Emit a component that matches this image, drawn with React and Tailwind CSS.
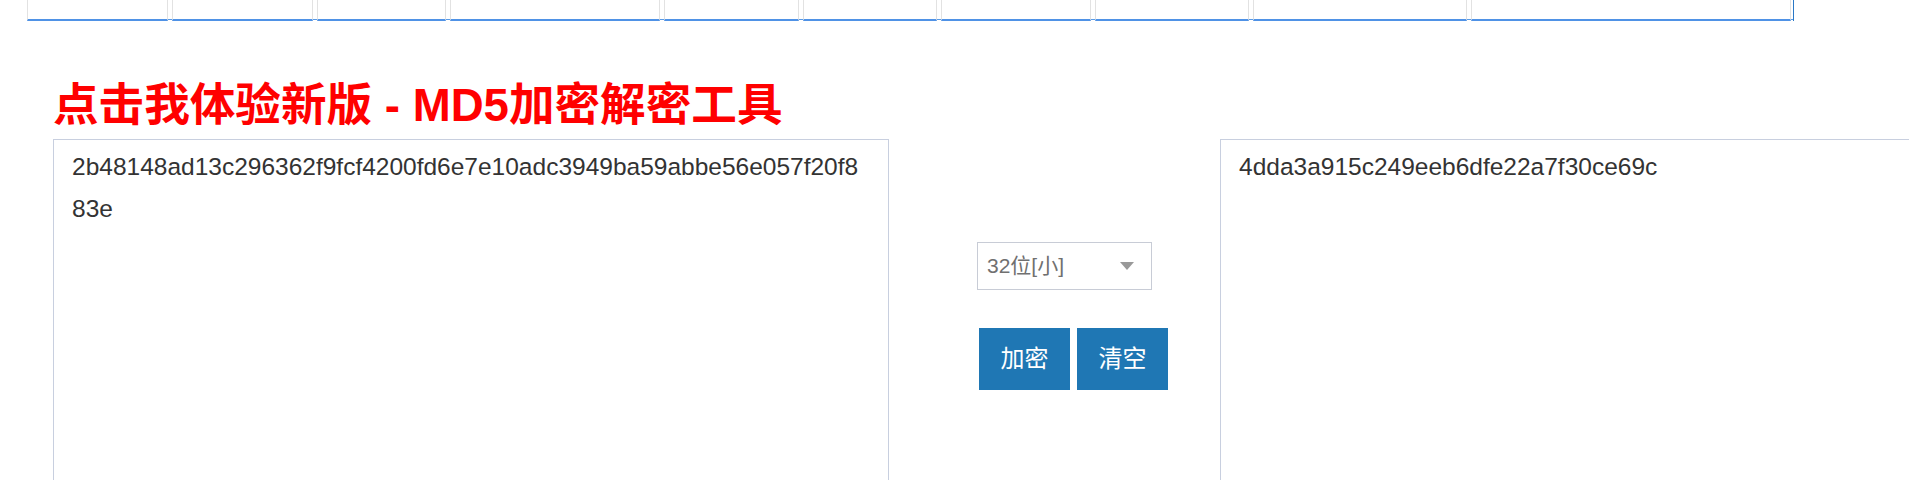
import React from "react";

const cellClasses = [
  "w-[141px]",
  "w-[141px]",
  "w-[129px]",
  "w-[210px]",
  "w-[135px]",
  "w-[134px]",
  "w-[150px]",
  "w-[154px]",
  "w-[214px]",
  "w-[320px]",
];

export default function App() {
  return (
    <div className="w-[1909px] h-[480px] overflow-hidden bg-white font-['Liberation_Sans','Noto_Sans_CJK_SC',sans-serif]">
      {/* top tab strip (bottom of cells only visible) */}
      <div className="ml-[27px] flex w-fit items-start gap-[4px] h-[20px] box-border border-b border-[#5a9be6]">
        {cellClasses.map((c, i) => (
          <div
            key={i}
            className={`${c} h-[21px] shrink-0 box-border border-x border-b-2 border-x-[#e2e2e2] border-b-[#4f92e6]`}
          />
        ))}
        <div className="-ml-[2px] w-px h-[21px] shrink-0 bg-[#2a78c6]" />
      </div>

      {/* title */}
      <div className="mt-[63px] ml-[53px] h-[46px] leading-[46px] text-[45.6px] font-bold text-[#ff0000] whitespace-nowrap">
        点击我体验新版 - MD5加密解密工具
      </div>

      {/* main row */}
      <div className="mt-[10px] ml-[53px] flex items-start">
        <textarea
          readOnly
          defaultValue="2b48148ad13c296362f9fcf4200fd6e7e10adc3949ba59abbe56e057f20f883e"
          className="w-[836px] h-[400px] shrink-0 box-border border border-[#c8cfdf] pt-[6px] pl-[18px] pr-[24px] text-[24.5px] leading-[42px] text-[#333] resize-none outline-none bg-white font-['Liberation_Sans',sans-serif]"
        />

        <div className="w-[331px] shrink-0 pt-[103px] pl-[88px]">
          <div className="w-[175px] h-[48px] box-border border border-[#c8ccd6] flex items-center justify-between pl-[9px] pr-[17px] text-[21px] text-[#707070]">
            <span>32位[小]</span>
            <svg width="14" height="8" viewBox="0 0 14 8">
              <path d="M0 0 L14 0 L7 8 Z" fill="#999" />
            </svg>
          </div>
          <div className="mt-[38px] ml-[2px] flex gap-[7px]">
            <button className="w-[91px] h-[62px] bg-[#1f77b4] text-white text-[24px] leading-none">
              加密
            </button>
            <button className="w-[91px] h-[62px] bg-[#1f77b4] text-white text-[24px] leading-none">
              清空
            </button>
          </div>
        </div>

        <textarea
          readOnly
          defaultValue="4dda3a915c249eeb6dfe22a7f30ce69c"
          className="w-[836px] h-[400px] shrink-0 box-border border border-[#c8cfdf] pt-[6px] pl-[18px] pr-[24px] text-[24.5px] leading-[42px] text-[#333] resize-none outline-none bg-white font-['Liberation_Sans',sans-serif]"
        />
      </div>
    </div>
  );
}
